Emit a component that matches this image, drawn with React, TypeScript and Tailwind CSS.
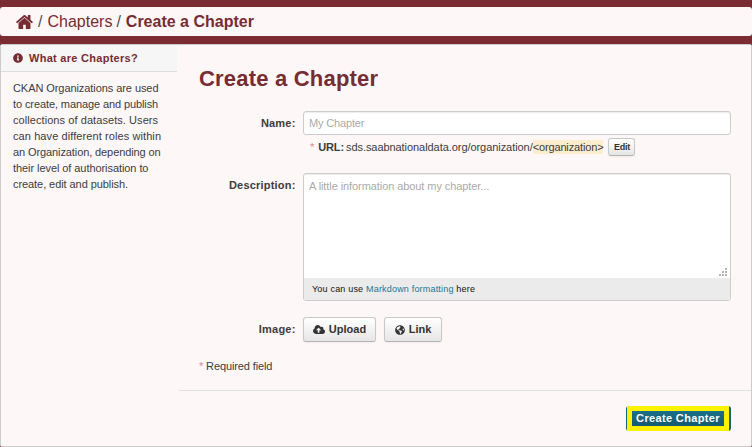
import { FaGlobeAmericas, FaInfoCircle } from "react-icons/fa";

const FONT = "font-['Liberation_Sans',Arial,sans-serif]";

function HomeIcon() {
  return (
    <svg viewBox="16 250 1636 1290" preserveAspectRatio="none" className="h-[14px] w-[17px] shrink-0 fill-[#762c32]">
      <path d="M1408 992v480q0 26-19 45t-45 19H960v-384H704v384H320q-26 0-45-19t-19-45V992q0-1 .5-3t.5-3l575-474 575 474q1 2 1 6zm223-69l-62 74q-8 9-21 11h-3q-13 0-21-7L832 424 140 1001q-12 8-24 7-13-2-21-11l-62-74q-8-10-7-23.5T37 878l719-599q32-26 76-26t76 26l244 204V288q0-14 9-23t23-9h192q14 0 23 9t9 23v408l219 182q10 8 11 21.5t-7 23.5z" />
    </svg>
  );
}

function UploadIcon() {
  return (
    <svg viewBox="0 128 1920 1408" className="h-[9px] w-[12px] shrink-0 fill-[#333]">
      <path d="M1280 928q0-14-9-23L919 553q-9-9-23-9t-23 9l-351 351q-10 12-10 24 0 14 9 23t23 9h224v352q0 13 9.5 22.5t22.5 9.5h192q13 0 22.5-9.5t9.5-22.5V960h224q13 0 22.5-9.5t9.5-22.5zm640 224q0 159-112.5 271.5T1536 1536H448q-185 0-316.5-131.5T0 1088q0-130 70-240t188-165q-2-30-2-43 0-212 150-362t362-150q156 0 285.5 87T1242 446q71-62 166-62 106 0 181 75t75 181q0 76-41 138 130 31 213.5 135.5T1920 1152z" />
    </svg>
  );
}

const BUTTON =
  "flex items-center rounded-[3px] border border-[#c8c8c8] border-b-[#b3b3b3] bg-linear-to-b from-white to-[#e6e6e6] font-bold text-[#333] shadow-[0_1px_2px_rgba(0,0,0,0.05)]";

const HELP = [
  { text: "CKAN Organizations are used", tracking: "tracking-[-0.07px]" },
  { text: "to create, manage and publish", tracking: "tracking-[-0.1px]" },
  { text: "collections of datasets. Users", tracking: "tracking-[0.07px]" },
  { text: "can have different roles within", tracking: "tracking-[0.09px]" },
  { text: "an Organization, depending on", tracking: "tracking-[-0.1px]" },
  { text: "their level of authorisation to", tracking: "tracking-[-0.07px]" },
  { text: "create, edit and publish.", tracking: "tracking-[-0.07px]" },
];

export default function App() {
  return (
    <div className={`${FONT} flex h-[447px] w-[752px] flex-col overflow-hidden bg-[#7b2c32] pt-[7px] text-[11px] whitespace-nowrap text-[#3c3c3c]`}>
      <nav className="mb-2 flex h-[29px] shrink-0 items-center rounded-[3px] bg-[#fdf7f7] pl-4 text-[16px] text-[#762c32]">
        <HomeIcon />
        <span className="ml-[5px] text-[#505050]">/</span>
        <span className="ml-[5px]">Chapters</span>
        <span className="ml-[4px] text-[#505050]">/</span>
        <span className="ml-[5px] font-bold">Create a Chapter</span>
      </nav>

      <div className="flex min-h-0 grow rounded-[2px] border border-[#ccc] bg-[#fdf7f7]">
        <aside className="w-[176px] shrink-0">
          <h2 className="flex h-[27px] items-center border-b border-[#ddd] bg-[#f6f6f6] pl-3 font-bold text-[#762c32]">
            <FaInfoCircle className="mr-[6px] size-[10px]" />
            <span className="tracking-[0.28px]">What are Chapters?</span>
          </h2>
          <div className="pt-2 pl-3 leading-[16px]">
            {HELP.map(({ text, tracking }) => (
              <p key={text} className={tracking}>
                {text}
              </p>
            ))}
          </div>
        </aside>

        <main className="ml-[2px] flex grow flex-col">
          <h1 className="mt-[20px] ml-5 h-[28px] text-[22px] leading-[28px] font-bold tracking-[0.2px] text-[#762c32]">Create a Chapter</h1>

          <div className="mt-[18px] flex pr-5">
            <label className="w-[117px] pt-[4px] pr-[0.5px] text-right leading-[16px] font-bold tracking-[0.2px]">Name:</label>
            <div className="ml-[7px] grow">
              <input
                placeholder="My Chapter"
                className="block h-6 w-full rounded-[3px] border border-[#ccc] bg-white px-[5px] text-[11px] tracking-[-0.15px] shadow-[inset_0_1px_1px_rgba(0,0,0,0.075)] outline-none placeholder:text-[#aaa]"
              />
              <div className="mt-[3px] flex h-[18px] items-center pl-[7px]">
                <span className="text-[#d08a8e]">*</span>
                <span className="ml-[4px] font-bold tracking-[-0.15px]">URL:</span>
                <span className="ml-[2px] tracking-[-0.06px]">sds.saabnationaldata.org/organization/</span>
                <span className="bg-[#fcedcd] leading-[14px] tracking-[-0.14px]">&lt;organization&gt;</span>
                <button className={`${BUTTON} ml-[5px] h-[18px] w-[27px] justify-center pt-px text-[9px] tracking-[-0.3px]`}>Edit</button>
              </div>
            </div>
          </div>

          <div className="mt-[17px] flex pr-5">
            <label className="w-[117px] pt-[4px] pr-[0.5px] text-right leading-[16px] font-bold tracking-[0.2px]">Description:</label>
            <div className="ml-[7px] flex h-[128px] grow flex-col overflow-hidden rounded-[3px] border border-[#ccc] bg-white">
              <div className="flex h-[104px] justify-between pr-[3px] pl-[5px] shadow-[inset_0_1px_1px_rgba(0,0,0,0.075)]">
                <p className="pt-[4px] leading-[16px] tracking-[-0.08px] text-[#aaa]">A little information about my chapter...</p>
                <svg viewBox="0 0 8 8" className="mb-[2px] size-2 self-end fill-[#b5b5b5]" shapeRendering="crispEdges">
                  <path d="M6 0h2v2H6zM3 3h2v2H3zM6 3h2v2H6zM0 6h2v2H0zM3 6h2v2H3zM6 6h2v2H6z" />
                </svg>
              </div>
              <p className="grow bg-[#ebebeb] pl-2 text-[9px] leading-[22px] tracking-[0.19px] text-[#111]">
                You can use <span className="text-[#187794]">Markdown formatting</span> here
              </p>
            </div>
          </div>

          <div className="mt-4 flex items-center">
            <span className="w-[117px] pr-[0.5px] text-right font-bold tracking-[0.2px]">Image:</span>
            <button className={`${BUTTON} ml-[7px] h-[25px] w-[73px] justify-center gap-[4px]`}>
              <UploadIcon />
              Upload
            </button>
            <button className={`${BUTTON} ml-2 h-[25px] w-[58px] justify-center gap-[4px]`}>
              <FaGlobeAmericas className="size-[10px]" />
              Link
            </button>
          </div>

          <p className="mt-4 ml-5 leading-[16px] tracking-[-0.12px]">
            <span className="text-[#d08a8e]">*</span> Required field
          </p>

          <div className="mt-4 flex grow items-start justify-end border-t border-[#e0e0e0] pt-[15px] pr-5">
            <button className="flex h-[25px] w-[105px] rounded-[3px] bg-[#15617a] pr-[2px] pl-px">
              <span className="flex h-[25px] grow items-center justify-center border-[5px] border-[#fff200] bg-linear-to-b from-[#1b6f89] to-[#145a70] font-bold tracking-[0.35px] text-white">
                Create Chapter
              </span>
            </button>
          </div>
        </main>
      </div>
    </div>
  );
}
